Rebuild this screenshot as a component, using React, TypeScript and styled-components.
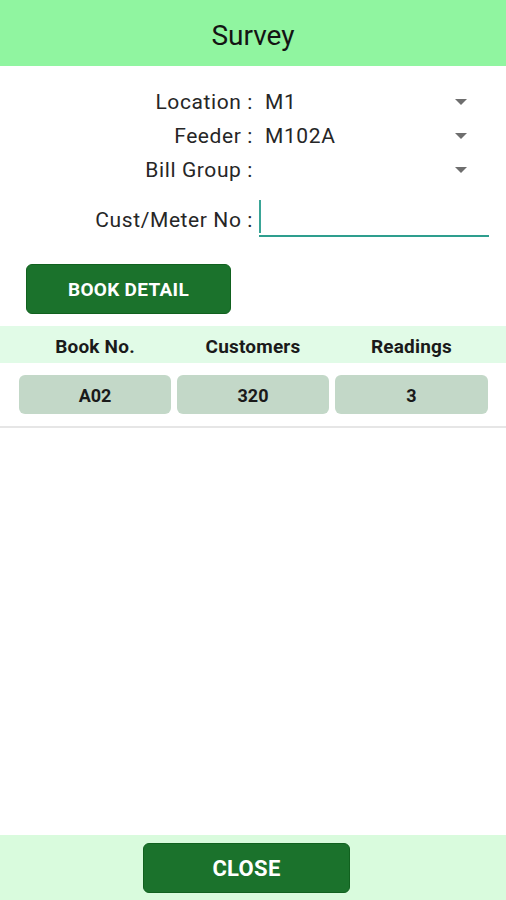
import React from "react";
import styled, { createGlobalStyle } from "styled-components";

const Global = createGlobalStyle`
  html, body { margin: 0; padding: 0; background: #ffffff; }
  body { font-family: Roboto, "Noto Sans", Arial, sans-serif; }
  * { box-sizing: border-box; }
`;

const Screen = styled.div`
  width: 506px;
  height: 900px;
  display: flex;
  flex-direction: column;
  background: #ffffff;
`;

const Header = styled.header`
  height: 66px;
  background: #90f5a0;
  display: flex;
  align-items: center;
  justify-content: center;
  font-size: 28px;
  color: #141414;
  padding-top: 5px;
`;

const Content = styled.main`
  flex: 1;
  display: flex;
  flex-direction: column;
`;

const Form = styled.div`
  display: grid;
  grid-template-columns: 253px 230px;
  column-gap: 6px;
  padding-top: 19px;
`;

const Label = styled.div<{ $tall?: boolean }>`
  height: 34px;
  display: flex;
  align-items: center;
  justify-content: flex-end;
  font-size: 21px;
  letter-spacing: 0.6px;
  color: #262626;
  white-space: pre;
  margin-top: ${(p) => (p.$tall ? "16px" : "0")};
`;

const Select = styled.div`
  height: 34px;
  display: flex;
  align-items: center;
  justify-content: space-between;
  padding: 0 22px 0 6px;
  font-size: 21px;
  letter-spacing: 0.6px;
  color: #262626;
`;

const Arrow = styled.span`
  width: 0;
  height: 0;
  border-left: 6px solid transparent;
  border-right: 6px solid transparent;
  border-top: 6px solid #6e6e6e;
`;

const Input = styled.div`
  margin-top: 16px;
  height: 34px;
  position: relative;
  border-bottom: 2px solid #2e9e8e;
`;

const Caret = styled.span`
  position: absolute;
  left: 0;
  top: -3px;
  width: 2px;
  height: 33px;
  background: #3aa597;
`;

const Button = styled.button<{ $w: number; $fs: number }>`
  width: ${(p) => p.$w}px;
  height: 50px;
  background: #1b722c;
  border: 1px solid #11611f;
  border-radius: 6px;
  color: #ffffff;
  font-family: Roboto, Arial, sans-serif;
  font-weight: 700;
  font-size: ${(p) => p.$fs}px;
  letter-spacing: 0.3px;
  display: flex;
  align-items: center;
  justify-content: center;
  padding: 0;
`;

const ButtonRow = styled.div`
  padding: 27px 0 0 26px;
`;

const TableHead = styled.div`
  margin-top: 12px;
  height: 37px;
  background: #e1fbe7;
  display: grid;
  grid-template-columns: 152px 152px 153px;
  column-gap: 6px;
  padding: 3px 18px 0 19px;
  align-items: center;
`;

const HeadCell = styled.div`
  text-align: center;
  font-weight: 700;
  font-size: 19px;
  letter-spacing: 0.2px;
  color: #1a1a1a;
`;

const DataRow = styled.div`
  margin-top: 12px;
  display: grid;
  grid-template-columns: 152px 152px 153px;
  column-gap: 6px;
  padding: 0 18px 12px 19px;
  border-bottom: 2px solid #e6e6e6;
`;

const DataCell = styled.div`
  height: 39px;
  background: #c3d8c8;
  border-radius: 6px;
  display: flex;
  align-items: center;
  justify-content: center;
  font-weight: 700;
  font-size: 18px;
  color: #1a1a1a;
  padding-top: 1px;
`;

const Footer = styled.footer`
  height: 65px;
  background: #d9fbdd;
  display: flex;
  justify-content: center;
  padding: 8px 13px 0 0;
`;

export default function App() {
  return (
    <>
      <Global />
      <Screen>
        <Header>Survey</Header>
        <Content>
          <Form>
            <Label>Location :</Label>
            <Select>
              <span>M1</span>
              <Arrow />
            </Select>
            <Label>Feeder :</Label>
            <Select>
              <span>M102A</span>
              <Arrow />
            </Select>
            <Label>Bill Group :</Label>
            <Select>
              <span></span>
              <Arrow />
            </Select>
            <Label $tall>Cust/Meter No :</Label>
            <Input>
              <Caret />
            </Input>
          </Form>
          <ButtonRow>
            <Button $w={205} $fs={19}>BOOK DETAIL</Button>
          </ButtonRow>
          <TableHead>
            <HeadCell>Book No.</HeadCell>
            <HeadCell>Customers</HeadCell>
            <HeadCell>Readings</HeadCell>
          </TableHead>
          <DataRow>
            <DataCell>A02</DataCell>
            <DataCell>320</DataCell>
            <DataCell>3</DataCell>
          </DataRow>
        </Content>
        <Footer>
          <Button $w={207} $fs={22}>CLOSE</Button>
        </Footer>
      </Screen>
    </>
  );
}
